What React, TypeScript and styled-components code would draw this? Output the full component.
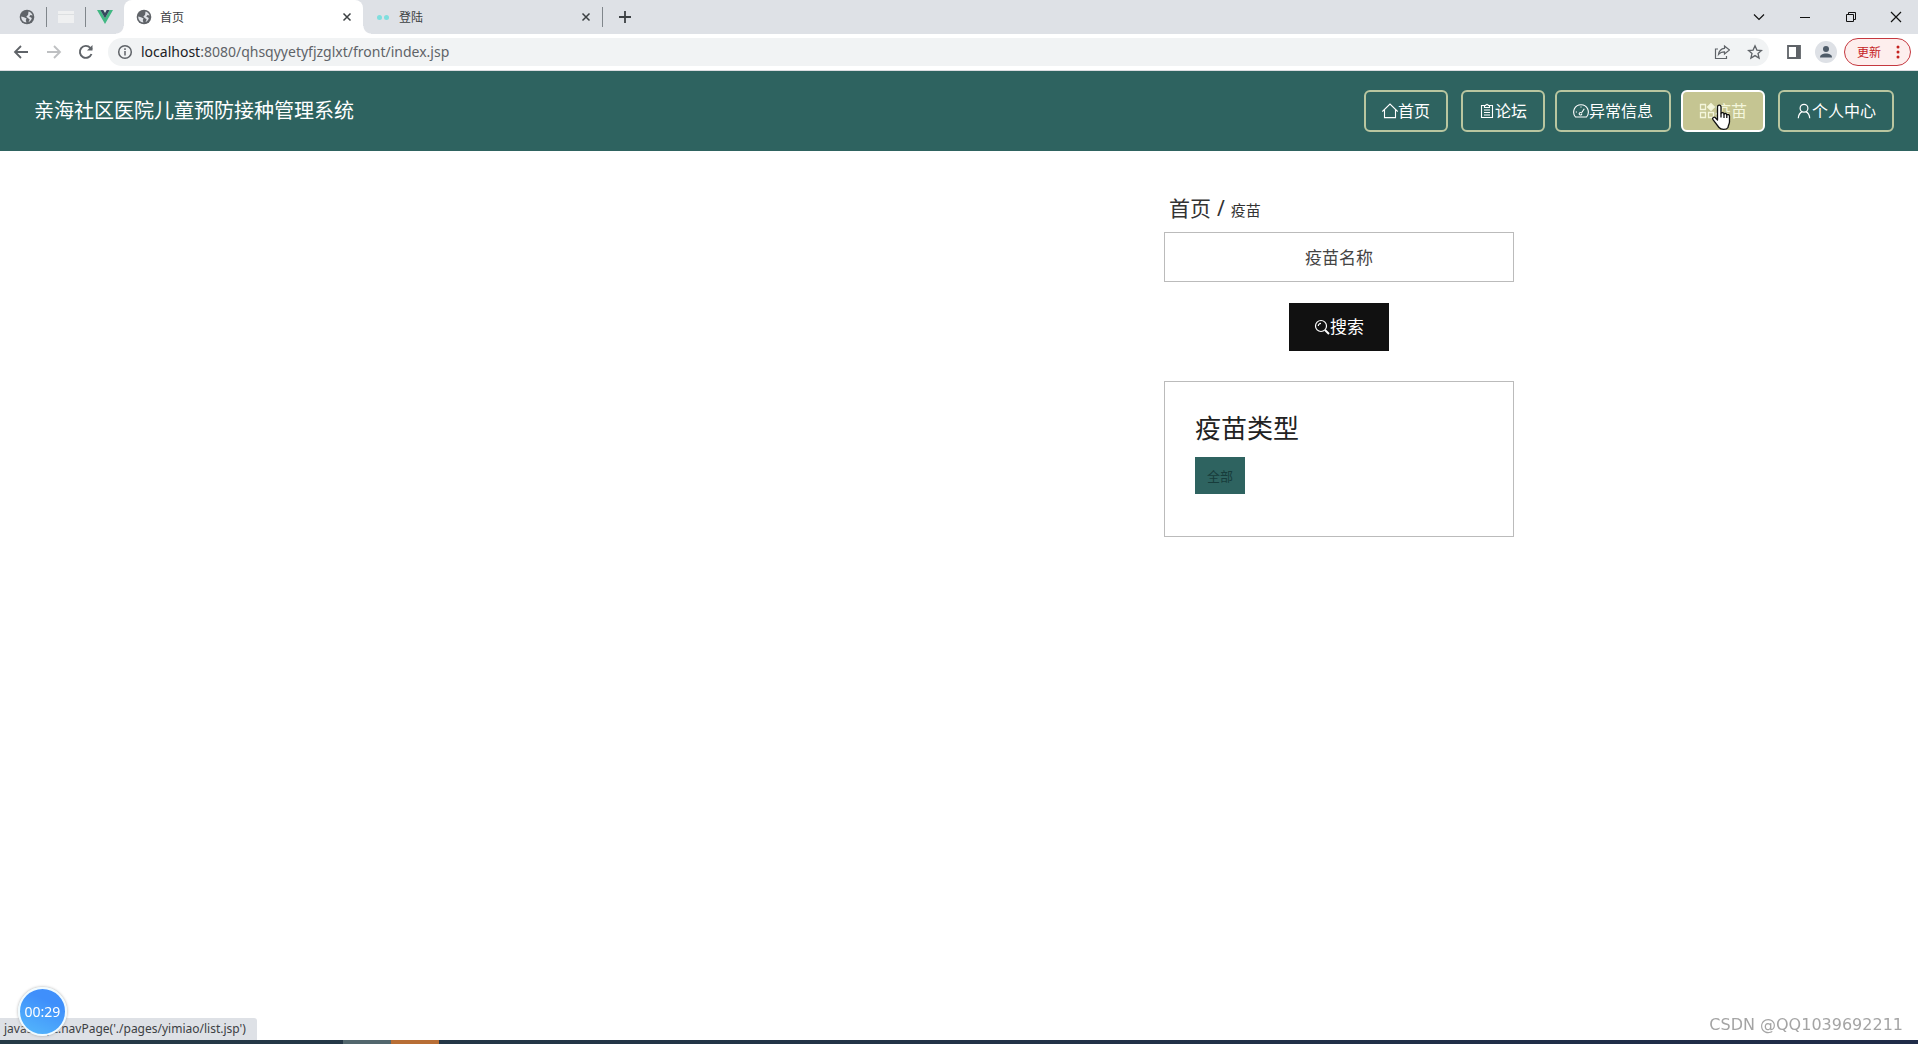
import React from 'react';
import styled, { createGlobalStyle, css } from 'styled-components';

const GlobalStyle = createGlobalStyle`
  * { box-sizing: border-box; }
  body {
    margin: 0;
    background: #fff;
    color: #111;
    font-family: "Noto Sans", "Noto Sans CJK SC", sans-serif;
  }
  button, input { font: inherit; }
  button { border: 0; padding: 0; background: none; color: inherit; cursor: pointer; }
  a { color: inherit; text-decoration: none; }
  svg { display: block; flex: none; }
`;

const Shell = styled.div`
  min-height: 100vh;
  display: flex;
  flex-direction: column;
`;

/* Browser window */

const TabStrip = styled.div`
  display: flex;
  align-items: center;
  height: 34px;
  background: #dee1e6;
  color: #3c4043;
  font-size: 12px;
`;

const PinnedTab = styled.button`
  display: flex;
  align-items: center;
  justify-content: center;
  width: 38px;
  height: 34px;
`;

const PinnedTabs = styled.div`
  display: flex;
  align-items: center;
  padding: 0 0 0 8px;
`;

const Divider = styled.span`
  width: 1px;
  height: 20px;
  background: #80868b;
`;

const Tab = styled.div<{ $active?: boolean }>`
  position: relative;
  display: flex;
  align-items: center;
  gap: 8px;
  height: 34px;
  width: 239px;
  padding: 0 8px 0 12px;
  ${(p) => p.$active && css`
    background: #fff;
    border-radius: 8px 8px 0 0;
    &::before, &::after {
      content: "";
      position: absolute;
      bottom: 0;
      width: 8px;
      height: 8px;
    }
    &::before {
      right: 100%;
      background: radial-gradient(circle at 0 0, transparent 7px, #fff 8px);
    }
    &::after {
      left: 100%;
      background: radial-gradient(circle at 100% 0, transparent 7px, #fff 8px);
    }
  `}
`;

const TabTitle = styled.span`
  flex: 1;
`;

const IconButton = styled.button<{ $w?: number; $faded?: boolean }>`
  display: flex;
  align-items: center;
  justify-content: center;
  width: ${(p) => p.$w ?? 16}px;
  height: 28px;
  flex: none;
  opacity: ${(p) => (p.$faded ? 0.4 : 1)};
`;

const WindowControls = styled.div`
  display: flex;
  margin-left: auto;
  height: 28px;
  color: #111;
`;

const Toolbar = styled.div`
  display: flex;
  align-items: center;
  height: 37px;
  padding: 0 7px 0 5px;
  background: #fff;
  border-bottom: 1px solid #dadce0;
  color: #5f6368;
`;

const Omnibox = styled.div`
  flex: 1;
  display: flex;
  align-items: center;
  gap: 8px;
  height: 28px;
  margin: 0 9px 0 7px;
  padding: 0 0 0 9px;
  border-radius: 14px;
  background: #f1f3f4;
`;

const Address = styled.span`
  flex: 1;
  font-size: 14px;
  line-height: 20px;
  color: #5f6368;
  b { font-weight: 400; color: #202124; }
`;

const Avatar = styled.button`
  display: flex;
  align-items: center;
  justify-content: center;
  width: 22px;
  height: 22px;
  margin: 0 7px 0 5px;
  border-radius: 50%;
  background: #dee1e6;
`;

const UpdateButton = styled.button`
  display: flex;
  align-items: center;
  justify-content: space-between;
  width: 67px;
  height: 28px;
  padding: 0 10px 0 12px;
  border: 1px solid #c5383f;
  border-radius: 14px;
  background: #fdeeed;
  color: #c5221f;
  font-size: 12px;
`;

/* Site */

const Header = styled.header`
  display: flex;
  align-items: center;
  justify-content: space-between;
  height: 80px;
  padding: 0 24px 0 34px;
  background: #2e6360;
  color: #fff;
`;

const SiteTitle = styled.a`
  font-size: 20px;
  line-height: 30px;
`;

const NavGroup = styled.div<{ $gap: number }>`
  display: flex;
  gap: ${(p) => p.$gap}px;
`;

const NavLink = styled.a<{ $active?: boolean }>`
  display: flex;
  align-items: center;
  justify-content: center;
  height: 42px;
  padding: 0 16px;
  border: 2px solid ${(p) => (p.$active ? '#fff' : '#b9c6a0')};
  border-radius: 6px;
  background: ${(p) => (p.$active ? '#c5c592' : 'transparent')};
  color: ${(p) => (p.$active ? '#f4f6dc' : '#fff')};
  font-size: 16px;
  line-height: 24px;
`;

const Main = styled.main`
  flex: 1;
  display: flex;
  justify-content: flex-end;
  width: 100%;
  max-width: 1140px;
  margin: 0 auto;
  padding: 40px 15px;
`;

const Sidebar = styled.aside`
  width: 350px;
  display: flex;
  flex-direction: column;
`;

const Breadcrumb = styled.nav`
  display: flex;
  align-items: baseline;
  gap: 6px;
  height: 34px;
  margin-bottom: 7px;
  padding: 0 5px;
  font-size: 21px;
  line-height: 34px;
  color: #333;
`;

const Crumb = styled.span`
  font-size: 15px;
`;

const SearchForm = styled.form`
  display: flex;
  flex-direction: column;
  align-items: center;
  gap: 21px;
  margin-bottom: 30px;
`;

const SearchInput = styled.input`
  width: 100%;
  height: 50px;
  border: 1px solid #bbb;
  text-align: center;
  font-size: 17px;
  color: #333;
  outline: none;
  &::placeholder { color: #444; opacity: 1; }
`;

const SearchButton = styled.button`
  display: flex;
  align-items: center;
  justify-content: center;
  width: 100px;
  height: 48px;
  background: #111;
  color: #fff;
  font-size: 17px;
  line-height: 24px;
`;

const Card = styled.section`
  min-height: 156px;
  padding: 28px 30px;
  border: 1px solid #bbb;
`;

const CardTitle = styled.h2`
  margin: 0 0 11px;
  font-size: 26px;
  font-weight: 400;
  line-height: 36px;
  color: #222;
`;

const TypeLink = styled.a`
  display: flex;
  align-items: center;
  justify-content: center;
  width: 50px;
  height: 37px;
  background: #2e6360;
  color: #173c3b;
  font-size: 13px;
`;

/* Desktop */

const Taskbar = styled.div`
  display: flex;
  height: 4px;
  padding-left: 343px;
  background: linear-gradient(90deg, #253a46, #1f2b48);
`;

const TaskItem = styled.span<{ $color: string }>`
  width: 48px;
  background: ${(p) => p.$color};
`;

const StatusBubble = styled.div`
  position: fixed;
  left: 0;
  bottom: 4px;
  width: 257px;
  height: 22px;
  padding-left: 4px;
  border-top-right-radius: 3px;
  background: #dee1e6;
  color: #3c4043;
  font-size: 12px;
  line-height: 22px;
  white-space: nowrap;
`;

const Timer = styled.div`
  position: fixed;
  left: 18px;
  bottom: 8px;
  display: flex;
  align-items: center;
  justify-content: center;
  width: 49px;
  height: 49px;
  border: 2px solid #f0fbff;
  border-radius: 50%;
  background: linear-gradient(25deg, #55b9fb, #3f8ffb 70%);
  box-shadow: 0 0 3px #aaa;
  color: #fff;
  font-size: 14px;
`;

const Watermark = styled.div`
  position: fixed;
  right: 15px;
  bottom: 7px;
  color: #a4a4a4;
  font-family: "DejaVu Sans", sans-serif;
  font-size: 16px;
  line-height: 24px;
`;

const Pointer = styled.svg`
  position: absolute;
  left: 30px;
  top: 14px;
`;

const PointerAnchor = styled.span`
  position: relative;
  display: flex;
`;

const Globe = () => (
  <svg width="16" height="16" viewBox="0 0 16 16">
    <circle cx="8" cy="8" r="7.3" fill="#5f6368" />
    <path d="M2.2 7.5 5 8.3l2.6 1.2-.8 1.4.6 2.5C4.700 13.500 2.200 11.200 2.200 7.500zM9.500 2.400c2 .6 3.600 2 4.200 4.100L11.500 6 10.200 7.600 12.800 9c-.4 2-1.700 3.400-3.300 4l1.200-2.600-3.400-2.600 1.800-2z" fill="#dee1e6" />
  </svg>
);

const Stroke = ({ d, size = 16, w = 1.5, children }: { d?: string; size?: number; w?: number; children?: React.ReactNode }) => (
  <svg width={size} height={size} viewBox="0 0 16 16" fill="none" stroke="currentColor" strokeWidth={w}>
    {d && <path d={d} />}
    {children}
  </svg>
);

const CLOSE = 'M4.500 4.500l7 7M11.500 4.500l-7 7';

const NAV_ICONS = {
  home: <Stroke w={1.1}><path d="M.3 8.500 8 1l7.700 7.500M2.500 6.600v8h11v-8" /></Stroke>,
  forum: <Stroke w={1.1}><path d="M5 2.500H2.500v12h11v-12H11M5.500 4.500v-2h1.300a1.200 1.200 0 0 1 2.400 0h1.300v2zM5 7h6M5 9.500h6M5 12h6" /></Stroke>,
  gauge: <Stroke w={1.1}><path d="M2.500 14C-1.500 9 1.500 1.800 8 1.800S17.500 9 13.500 14zM8.300 10.200l3-4.500M8.800 10.800a1.300 1.300 0 1 1-.9-1.300M2.800 9h1.200M8 3.600v1" /></Stroke>,
  grid: <Stroke w={1.3}><path d="M1.500 1.500h5v5h-5zM1.500 9.500h5v5h-5zM9.500 9.500h5v5h-5z" /><path d="m12 .6 3.400 3.400L12 7.400 8.600 4z" fill="currentColor" /></Stroke>,
  user: <Stroke w={1.2}><circle cx="8" cy="5.200" r="3.900" /><path d="M2.300 15.300c.2-3.400 1.700-5.600 3.800-6.700M9.800 8.600c2.300 1 3.700 3.200 3.900 6.700" /></Stroke>,
};

const HandPointer = () => (
  <Pointer width="20" height="27" viewBox="0 0 20 27" fill="#fff" stroke="#111" strokeWidth="1.300" strokeLinejoin="round">
    <path d="M6.500 16V3c0-2.600 3.500-2.600 3.500 0v6.500c.7-1.400 2.800-1 3 .5.800-1 2.600-.6 2.800.8 1-.7 2.700-.2 2.700 1.400V18c0 2-1.500 3.500-1.500 5.500-1.500 2.500-7 2.500-9 0L2 15.700c-1.200-1.800 1-3.400 2.400-2z" />
    <path d="M10 9.500v4M13 10v4M15.800 10.800V14" />
  </Pointer>
);

export default function App() {
  return (
    <Shell>
      <GlobalStyle />
      <TabStrip>
        <PinnedTabs>
          <PinnedTab aria-label="Pinned page"><Globe /></PinnedTab>
          <Divider />
          <PinnedTab aria-label="Pinned document">
            <svg width="16" height="14" viewBox="0 0 16 14"><path d="M0 1h16v12H0z" fill="#eff0f1" /><path d="M0 4.500h16" stroke="#dcdfe1" /></svg>
          </PinnedTab>
          <Divider />
          <PinnedTab aria-label="Pinned Vue app">
            <svg width="16" height="14" viewBox="0 0 16 14"><path d="M0 0h3.300L8 8.200 12.700 0H16L8 14z" fill="#41b883" /><path d="M3.300 0h3L8 3l1.700-3h3L8 8.200z" fill="#35495e" /></svg>
          </PinnedTab>
        </PinnedTabs>
        <Tab $active>
          <Globe />
          <TabTitle>首页</TabTitle>
          <IconButton aria-label="Close tab"><Stroke d={CLOSE} /></IconButton>
        </Tab>
        <Tab>
          <svg width="16" height="16" viewBox="0 0 16 16" fill="#7fdede"><circle cx="4.500" cy="8.500" r="2.500" /><circle cx="11.500" cy="8.500" r="2.500" /></svg>
          <TabTitle>登陆</TabTitle>
          <IconButton aria-label="Close tab"><Stroke d={CLOSE} /></IconButton>
        </Tab>
        <Divider />
        <IconButton $w={44} aria-label="New tab"><Stroke d="M8 2v12M2 8h12" w={1.800} /></IconButton>
        <WindowControls>
          <IconButton $w={46} aria-label="Search tabs"><Stroke d="M3 5.500 8 10.500l5-5" w={1.200} /></IconButton>
          <IconButton $w={46} aria-label="Minimize"><Stroke d="M3 8.500h10" w={1} /></IconButton>
          <IconButton $w={46} aria-label="Restore"><Stroke d="M3.500 5.500h7v7h-7zM5.500 5.500v-2h7v7h-2" w={1} /></IconButton>
          <IconButton $w={44} aria-label="Close window"><Stroke d="M3 3l10 10M13 3 3 13" w={1.200} /></IconButton>
        </WindowControls>
      </TabStrip>
      <Toolbar>
        <IconButton $w={32} aria-label="Back"><Stroke d="M15 8H2M8 2 2 8l6 6" w={1.800} /></IconButton>
        <IconButton $w={34} $faded aria-label="Forward"><Stroke d="M1 8h13M8 2l6 6-6 6" w={1.800} /></IconButton>
        <IconButton $w={30} aria-label="Reload"><Stroke w={1.900}><path d="M13.500 10A6 6 0 1 1 12.300 3.800L14 5.500" /><path d="M14.500 1v5.500H9z" fill="currentColor" stroke="none" /></Stroke></IconButton>
        <Omnibox>
          <Stroke><circle cx="8" cy="8" r="6.300" /><path d="M8 7v4.500M8 4.300V6" /></Stroke>
          <Address><b>localhost</b>:8080/qhsqyyetyfjzglxt/front/index.jsp</Address>
          <IconButton $w={22} aria-label="Share"><Stroke w={1.200}><path d="M4 5H1.500v9.500h11V12M15.500 6 10.500 2v2.300C7 4.600 5 7 4.500 10.500 6 8.600 8 7.800 10.500 7.800V10z" /></Stroke></IconButton>
          <IconButton $w={28} aria-label="Bookmark"><Stroke w={1.300} d="m8 1.800 1.900 4.300 4.600.4-3.500 3 1.100 4.600L8 11.600l-4.100 2.500L5 9.500l-3.500-3 4.600-.4z" /></IconButton>
        </Omnibox>
        <IconButton $w={32} aria-label="Side panel"><Stroke w={1.800}><path d="M2 2h12v12H2z" /><path d="M10 2h4v12h-4z" fill="currentColor" stroke="none" /></Stroke></IconButton>
        <Avatar aria-label="Profile"><svg width="14" height="14" viewBox="0 0 14 14" fill="#4e5b68"><circle cx="7" cy="4" r="3" /><path d="M1 12.500C1 9.500 4 8.500 7 8.500s6 1 6 4z" /></svg></Avatar>
        <UpdateButton>更新<svg width="4" height="14" viewBox="0 0 4 14" fill="currentColor"><circle cx="2" cy="2" r="1.500" /><circle cx="2" cy="7" r="1.500" /><circle cx="2" cy="12" r="1.500" /></svg></UpdateButton>
      </Toolbar>
      <Header>
        <SiteTitle href="#">亲海社区医院儿童预防接种管理系统</SiteTitle>
        <nav>
          <NavGroup $gap={13}>
            <NavLink href="#">{NAV_ICONS.home}首页</NavLink>
            <NavGroup $gap={10}>
              <NavLink href="#">{NAV_ICONS.forum}论坛</NavLink>
              <NavLink href="#">{NAV_ICONS.gauge}异常信息</NavLink>
              <PointerAnchor>
                <NavLink href="#" $active>{NAV_ICONS.grid}疫苗</NavLink>
                <HandPointer />
              </PointerAnchor>
            </NavGroup>
            <NavLink href="#">{NAV_ICONS.user}个人中心</NavLink>
          </NavGroup>
        </nav>
      </Header>
      <Main>
        <Sidebar>
          <Breadcrumb>
            <a href="#">首页</a>
            <span>/</span>
            <Crumb>疫苗</Crumb>
          </Breadcrumb>
          <SearchForm onSubmit={(e) => e.preventDefault()}>
            <SearchInput type="text" placeholder="疫苗名称" aria-label="疫苗名称" />
            <SearchButton type="submit">
              <Stroke w={1.200}><circle cx="7" cy="7" r="5.500" /><path d="M4.300 7A2.700 2.700 0 0 1 7 4.300" /><path d="m11 11 4 4" strokeWidth="2" /></Stroke>
              搜索
            </SearchButton>
          </SearchForm>
          <Card>
            <CardTitle>疫苗类型</CardTitle>
            <TypeLink href="#">全部</TypeLink>
          </Card>
        </Sidebar>
      </Main>
      <Taskbar>
        <TaskItem $color="#52676d" />
        <TaskItem $color="#b86e35" />
      </Taskbar>
      <StatusBubble>javascript:navPage('./pages/yimiao/list.jsp')</StatusBubble>
      <Timer>00:29</Timer>
      <Watermark>CSDN @QQ1039692211</Watermark>
    </Shell>
  );
}
